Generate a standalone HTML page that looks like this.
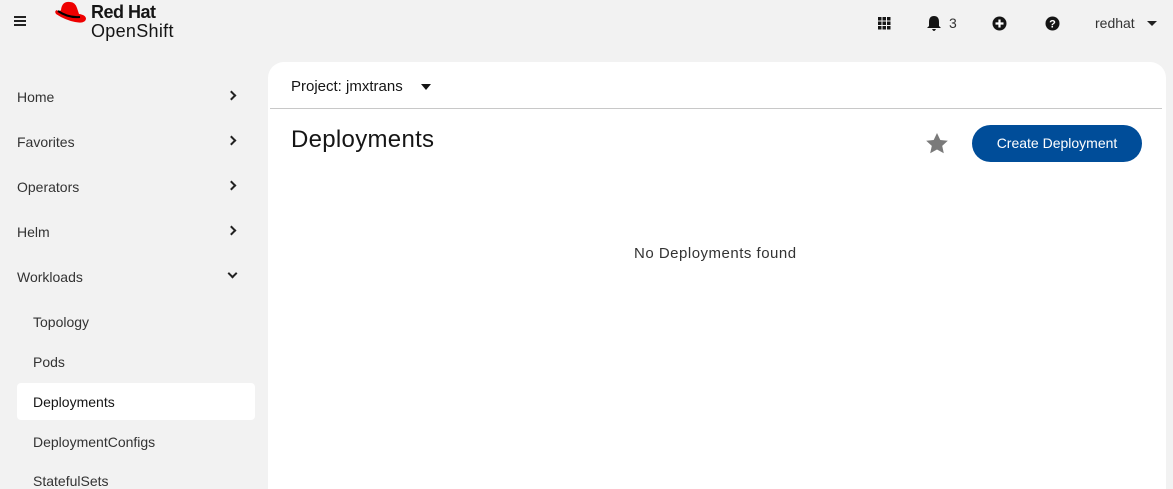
<!DOCTYPE html>
<html><head><style>
*{margin:0;padding:0;box-sizing:border-box}
html,body{width:1173px;height:489px;overflow:hidden}
body{background:#f2f2f2;font-family:"Liberation Sans",sans-serif;color:#151515;position:relative}
.a{position:absolute}
.nav{font-size:14px;color:#333}
.chev{position:absolute;left:228px;width:7px;height:7px;border-right:2px solid #222;border-bottom:2px solid #222;transform:rotate(-45deg)}
</style></head><body>
<div class="a" style="left:14px;top:16px;width:12px">
<div style="height:2px;background:#222;margin-bottom:2px"></div><div style="height:2px;background:#222;margin-bottom:2px"></div><div style="height:2px;background:#222"></div></div>
<svg class="a" style="left:53px;top:0" width="36" height="28" viewBox="0 0 36 28"><path d="M8 10 Q9 1 17 2 Q22 2 24 8 L26 14 Q33 15 33 19 Q32 24 22 22 Q12 20 3 14 Q1 11 4 10 Q6 13 8 10Z" fill="#e00"/><path d="M5 11 Q15 18 27 17" stroke="#000" stroke-width="2" fill="none"/></svg>
<div class="a" style="left:91px;top:2px;font-size:18px;font-weight:bold;letter-spacing:-0.5px">Red Hat</div>
<div class="a" style="left:91px;top:21px;font-size:18px;letter-spacing:0.3px">OpenShift</div>
<svg class="a" style="left:878px;top:17px" width="13" height="13"><g fill="#151515"><rect x="0" y="0" width="3.5" height="3.5"/><rect x="4.5" y="0" width="3.5" height="3.5"/><rect x="9" y="0" width="3.5" height="3.5"/><rect x="0" y="4.5" width="3.5" height="3.5"/><rect x="4.5" y="4.5" width="3.5" height="3.5"/><rect x="9" y="4.5" width="3.5" height="3.5"/><rect x="0" y="9" width="3.5" height="3.5"/><rect x="4.5" y="9" width="3.5" height="3.5"/><rect x="9" y="9" width="3.5" height="3.5"/></g></svg>
<svg class="a" style="left:927px;top:15px" width="14" height="16"><path d="M7 1 Q12 1 12 7 L12 11 L14 13 L0 13 L2 11 L2 7 Q2 1 7 1Z M5 14 L9 14 Q8 16 7 16 Q6 16 5 14Z" fill="#151515"/></svg>
<div class="a" style="left:949px;top:15px;font-size:14px;color:#333">3</div>
<svg class="a" style="left:992px;top:16px" width="15" height="15"><circle cx="7.5" cy="7.5" r="7" fill="#151515"/><path d="M7.5 3.5v8M3.5 7.5h8" stroke="#fff" stroke-width="2.2"/></svg>
<svg class="a" style="left:1045px;top:16px" width="15" height="15"><circle cx="7.5" cy="7.5" r="7" fill="#151515"/><text x="7.5" y="11.5" font-size="11" font-weight="bold" fill="#fff" text-anchor="middle" font-family="Liberation Sans">?</text></svg>
<div class="a" style="left:1095px;top:15px;font-size:14px;color:#333">redhat</div>
<div class="a" style="left:1147px;top:21px;border-left:5px solid transparent;border-right:5px solid transparent;border-top:5px solid #222"></div>

<div class="a nav" style="left:17px;top:89px">Home</div><div class="chev" style="top:92px"></div>
<div class="a nav" style="left:17px;top:134px">Favorites</div><div class="chev" style="top:137px"></div>
<div class="a nav" style="left:17px;top:179px">Operators</div><div class="chev" style="top:182px"></div>
<div class="a nav" style="left:17px;top:224px">Helm</div><div class="chev" style="top:227px"></div>
<div class="a nav" style="left:17px;top:269px">Workloads</div><div class="chev" style="top:270px;transform:rotate(45deg);left:229px"></div>
<div class="a nav" style="left:33px;top:314px">Topology</div>
<div class="a nav" style="left:33px;top:354px">Pods</div>
<div class="a" style="left:17px;top:383px;width:238px;height:37px;background:#fff;border-radius:4px"></div>
<div class="a nav" style="left:33px;top:394px;color:#151515">Deployments</div>
<div class="a nav" style="left:33px;top:434px">DeploymentConfigs</div>
<div class="a nav" style="left:33px;top:473px">StatefulSets</div>

<div class="a" style="left:268px;top:62px;width:898px;height:427px;background:#fff;border-radius:16px 16px 0 0"></div>
<div class="a" style="left:291px;top:78px;font-size:15px">Project: jmxtrans</div>
<div class="a" style="left:421px;top:84px;border-left:5px solid transparent;border-right:5px solid transparent;border-top:6px solid #151515"></div>
<div class="a" style="left:270px;top:108px;width:892px;height:1px;background:#c8c8c8"></div>
<div class="a" style="left:291px;top:126px;font-size:24px;letter-spacing:0.3px">Deployments</div>
<svg class="a" style="left:925px;top:132px" width="24" height="23" viewBox="0 0 24 23"><path d="M12 1l3.3 7 7.5.8-5.6 5.1 1.6 7.4L12 17.5 5.2 21.3l1.6-7.4L1.2 8.8l7.5-.8z" fill="#7a7a7a"/></svg>
<div class="a" style="left:972px;top:125px;width:170px;height:37px;background:#004d99;border-radius:19px;color:#fff;font-size:14px;text-align:center;line-height:37px">Create Deployment</div>
<div class="a" style="left:634px;top:245px;font-size:15px;color:#333;letter-spacing:0.5px">No Deployments found</div>
</body></html>
